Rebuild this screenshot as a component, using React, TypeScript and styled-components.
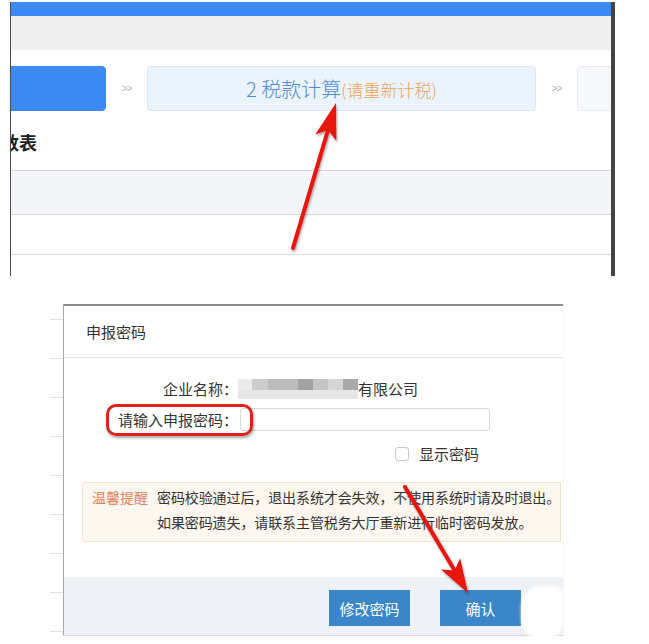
import React from 'react'
import styled, { createGlobalStyle } from 'styled-components'

const GlobalStyle = createGlobalStyle`
  html, body {
    margin: 0;
    padding: 0;
    background: #fff;
  }
  body {
    font-family: "Noto Sans CJK SC", "Liberation Sans", sans-serif;
    color: #333;
  }
`

const Page = styled.div`
  position: relative;
  width: 649px;
  height: 644px;
  overflow: hidden;
  background: #fff;
`

/* ---------- top screenshot ---------- */

const TopShot = styled.div`
  margin: 2px 0 0 10px;
  width: 600px;
  height: 274px;
  border-left: 1px solid #4a4a4a;
  border-right: 4px solid #444;
  overflow: hidden;
  display: flex;
  flex-direction: column;
`

const BlueBar = styled.div`
  height: 14px;
  flex: none;
  background: #3d8af6;
`

const GrayBand = styled.div`
  height: 34px;
  flex: none;
  background: #efefef;
`

const Steps = styled.div`
  display: flex;
  align-items: center;
  padding-top: 16px;
  flex: none;
`

const stepColors = {
  done: { bg: '#3d8af5', border: '#3d8af5' },
  active: { bg: '#eaf3fe', border: '#d8e7f8' },
  next: { bg: '#f6f8fb', border: '#e7ebf0' },
}

const Step = styled.div<{ $state: 'done' | 'active' | 'next' }>`
  flex: none;
  width: 389px;
  height: 45px;
  box-sizing: border-box;
  border-radius: 4px;
  border: 1px solid ${(p) => stepColors[p.$state].border};
  background: ${(p) => stepColors[p.$state].bg};
  margin-left: ${(p) => (p.$state === 'done' ? '-294px' : '0')};
  display: flex;
  align-items: baseline;
  justify-content: center;
  padding-top: 7px;
`

const StepNum = styled.span`
  color: #4f8dd3;
  font-size: 20px;
  font-weight: 300;
`

const StepHint = styled.span`
  color: #f0a158;
  font-size: 17px;
  font-weight: 300;
`

const Sep = styled.div`
  flex: none;
  width: 41px;
  text-align: center;
  font-family: "Liberation Sans", sans-serif;
  font-size: 10px;
  color: #b5b5b5;
  letter-spacing: -1px;
`

const Heading = styled.div`
  height: 59px;
  flex: none;
  display: flex;
  align-items: center;
  padding-top: 2px;
  box-sizing: border-box;
  margin-left: -10px;
  font-size: 18px;
  font-weight: 700;
  color: #1e1e1e;
`

const TableHead = styled.div`
  height: 43px;
  flex: none;
  background: #f4f5f8;
  border-top: 1px solid #d9d9d9;
  border-bottom: 1px solid #d9d9d9;
`

const TableRow = styled.div`
  height: 39px;
  flex: none;
  border-bottom: 1px solid #d9d9d9;
`

/* ---------- dialog screenshot ---------- */

const DialogShot = styled.div`
  display: flex;
  margin: 28px 0 0 50px;
`

const Backdrop = styled.div`
  width: 13px;
  height: 330px;
  flex: none;
  background: repeating-linear-gradient(
    to bottom,
    transparent 0,
    transparent 15px,
    #e2e2e2 15px,
    #e2e2e2 16px,
    transparent 16px,
    transparent 39px
  );
`

const Dialog = styled.div`
  position: relative;
  width: 499px;
  flex: none;
  border-left: 1px solid #a8a8a8;
  border-top: 2px solid #8c8c8c;
  box-shadow: 0 1px 1px rgba(0, 0, 0, 0.15);
  background: #fff;
`

const DialogHeader = styled.div`
  height: 51px;
  display: flex;
  align-items: center;
  padding-left: 22px;
  border-bottom: 1px solid #e5e5e5;
  font-size: 15px;
  color: #333;
`

const DialogBody = styled.div`
  padding-top: 19px;
`

const Form = styled.div`
  display: grid;
  grid-template-columns: 174px 1fr;
  grid-auto-rows: 23px;
  row-gap: 8px;
  align-items: center;
  font-size: 15px;
  color: #333;
`

const Label = styled.div<{ $highlight?: boolean }>`
  position: relative;
  height: 23px;
  display: flex;
  align-items: center;
  justify-content: flex-end;

  &::after {
    content: '';
    display: ${(p) => (p.$highlight ? 'block' : 'none')};
    position: absolute;
    left: 42px;
    right: -15px;
    top: -4px;
    bottom: -5px;
    border: 3px solid #e3211b;
    border-radius: 10px;
    box-shadow: 1px 2px 3px rgba(0, 0, 0, 0.35);
    pointer-events: none;
  }
`

const Value = styled.div`
  display: flex;
  align-items: center;
  height: 23px;
`

const Redaction = styled.div`
  display: flex;
  height: 20px;
`

const Pixel = styled.span<{ $w: number; $c: string }>`
  width: ${(p) => p.$w}px;
  height: 100%;
  background: linear-gradient(to bottom, ${(p) => p.$c} 55%, #e6e6e6 55%);
`

const PasswordInput = styled.input`
  margin-left: 2px;
  width: 250px;
  height: 23px;
  box-sizing: border-box;
  border: 1px solid #dadada;
  border-radius: 3px;
  outline: none;
`

const CheckRow = styled.div`
  grid-column: 2;
  display: flex;
  align-items: center;
  padding-left: 157px;
  margin-top: 6px;
`

const CheckBox = styled.span`
  width: 14px;
  height: 14px;
  box-sizing: border-box;
  border: 1px solid #c9c9c9;
  border-radius: 3px;
  background: #fff;
`

const CheckText = styled.span`
  margin-left: 10px;
`

const Notice = styled.div`
  margin: 20px 2px 0 18px;
  padding: 2px 0 6px 9px;
  background: #fdf7f0;
  border: 1px solid #f3e4cf;
  display: grid;
  grid-template-columns: 65px 1fr;
  font-size: 14px;
  line-height: 25px;
  color: #333;
  white-space: nowrap;
`

const NoticeTag = styled.span`
  color: #e7855a;
`

const NoticeText = styled.span`
  letter-spacing: -0.1px;
`

const Footer = styled.div`
  position: relative;
  margin-top: 35px;
  height: 58px;
  background: #eef1f5;
  display: flex;
  justify-content: flex-end;
  align-items: flex-start;
  gap: 30px;
  padding: 13px 42px 0 0;
  box-sizing: border-box;
`

const Button = styled.button`
  width: 81px;
  height: 36px;
  border: none;
  background: #3a86c8;
  color: #fff;
  font-family: "Noto Sans CJK SC", sans-serif;
  font-size: 15px;
  padding: 0;
`

const Scribble = styled.div`
  position: absolute;
  right: 0;
  top: 9px;
  width: 42px;
  height: 52px;
  background: #fff;
  border-radius: 45% 20% 30% 40%;
  filter: blur(1.5px);
`

const Arrows = styled.svg`
  position: absolute;
  left: 0;
  top: 0;
  pointer-events: none;
`

const Arrow = ({ tail, notch, tip, l, r }: { tail: number[]; notch: number[]; tip: number[]; l: number[]; r: number[] }) => (
  <g filter="url(#shadow)">
    <line x1={tail[0]} y1={tail[1]} x2={notch[0]} y2={notch[1]} stroke="#e8120f" strokeWidth={4} strokeLinecap="round" />
    <polygon points={`${tip[0]},${tip[1]} ${l[0]},${l[1]} ${notch[0]},${notch[1]} ${r[0]},${r[1]}`} fill="#e8120f" />
  </g>
)

const pixels: [number, string][] = [
  [14, '#ececec'],
  [16, '#cdcdcd'],
  [30, '#bcbcbc'],
  [15, '#a2a2a2'],
  [15, '#c4c4c4'],
  [15, '#d5d5d5'],
  [15, '#aaaaaa'],
]

export default function App() {
  return (
    <Page>
      <GlobalStyle />
      <TopShot>
        <BlueBar />
        <GrayBand />
        <Steps>
          <Step $state="done" />
          <Sep>&gt;&gt;</Sep>
          <Step $state="active">
            <StepNum>2 税款计算</StepNum>
            <StepHint>(请重新计税)</StepHint>
          </Step>
          <Sep>&gt;&gt;</Sep>
          <Step $state="next" />
        </Steps>
        <Heading>数表</Heading>
        <TableHead />
        <TableRow />
      </TopShot>

      <DialogShot>
        <Backdrop />
        <Dialog>
          <DialogHeader>申报密码</DialogHeader>
          <DialogBody>
            <Form>
              <Label>企业名称：</Label>
              <Value>
                <Redaction>
                  {pixels.map(([w, c], i) => (
                    <Pixel key={i} $w={w} $c={c} />
                  ))}
                </Redaction>
                有限公司
              </Value>
              <Label $highlight>请输入申报密码：</Label>
              <Value>
                <PasswordInput type="password" />
              </Value>
              <CheckRow>
                <CheckBox />
                <CheckText>显示密码</CheckText>
              </CheckRow>
            </Form>
            <Notice>
              <NoticeTag>温馨提醒</NoticeTag>
              <NoticeText>
                密码校验通过后，退出系统才会失效，不使用系统时请及时退出。
                <br />
                如果密码遗失，请联系主管税务大厅重新进行临时密码发放。
              </NoticeText>
            </Notice>
            <Footer>
              <Button>修改密码</Button>
              <Button>确认</Button>
              <Scribble />
            </Footer>
          </DialogBody>
        </Dialog>
      </DialogShot>

      <Arrows width={649} height={644} viewBox="0 0 649 644">
        <defs>
          <filter id="shadow" x="-20%" y="-20%" width="140%" height="140%">
            <feDropShadow dx="1" dy="2" stdDeviation="1.2" floodColor="#000" floodOpacity="0.35" />
          </filter>
        </defs>
        <Arrow tail={[293, 248]} notch={[328, 130]} tip={[336, 103]} l={[315.2, 134.4]} r={[336.3, 140.7]} />
        <Arrow tail={[405, 487]} notch={[454.7, 570.6]} tip={[468, 593]} l={[460.1, 558.2]} r={[441.1, 569.4]} />
      </Arrows>
    </Page>
  )
}
